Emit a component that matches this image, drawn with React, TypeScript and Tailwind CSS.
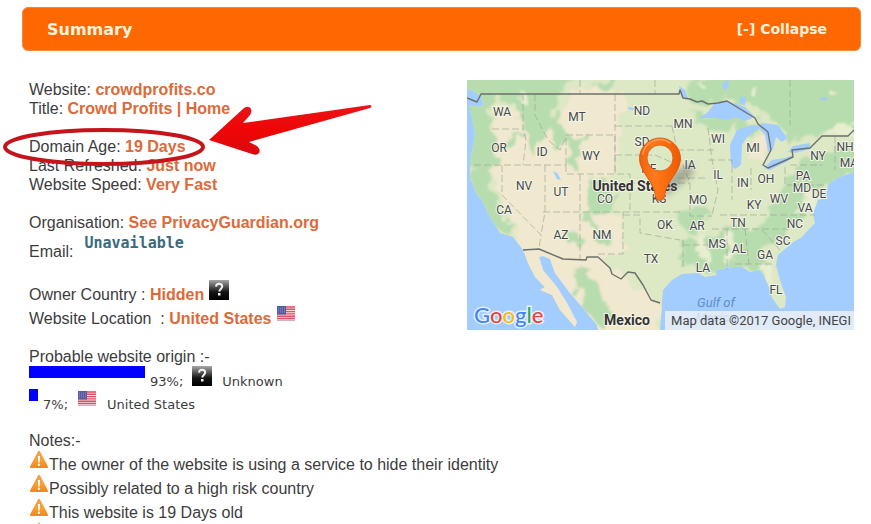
import React from 'react'

interface StateLabel {
  name: string;
  x: number;
  y: number;
}

const stateLabels: StateLabel[] = [
  { name: 'WA', x: 502, y: 112 }, { name: 'MT', x: 577, y: 117 }, { name: 'ND', x: 642, y: 111 },
  { name: 'MN', x: 683, y: 124 }, { name: 'OR', x: 499, y: 148 }, { name: 'ID', x: 542, y: 152 },
  { name: 'WY', x: 591, y: 156 }, { name: 'SD', x: 642, y: 142 }, { name: 'NE', x: 649, y: 169 },
  { name: 'IA', x: 690, y: 165 }, { name: 'WI', x: 718, y: 139 }, { name: 'MI', x: 753, y: 148 },
  { name: 'NV', x: 524, y: 186 }, { name: 'UT', x: 561, y: 192 }, { name: 'CO', x: 605, y: 199 },
  { name: 'KS', x: 659, y: 199 }, { name: 'MO', x: 698, y: 200 }, { name: 'IL', x: 718, y: 175 },
  { name: 'IN', x: 743, y: 183 }, { name: 'OH', x: 766, y: 179 }, { name: 'PA', x: 803, y: 176 },
  { name: 'NY', x: 818, y: 156 }, { name: 'NH', x: 845, y: 147 }, { name: 'MA', x: 849, y: 163 },
  { name: 'MD', x: 802, y: 188 }, { name: 'DE', x: 819, y: 194 }, { name: 'WV', x: 779, y: 199 },
  { name: 'KY', x: 754, y: 205 }, { name: 'VA', x: 805, y: 208 }, { name: 'TN', x: 738, y: 223 },
  { name: 'NC', x: 795, y: 224 }, { name: 'SC', x: 783, y: 241 }, { name: 'GA', x: 765, y: 255 },
  { name: 'AL', x: 739, y: 249 }, { name: 'MS', x: 717, y: 244 }, { name: 'AR', x: 697, y: 226 },
  { name: 'OK', x: 665, y: 225 }, { name: 'LA', x: 703, y: 268 }, { name: 'FL', x: 776, y: 290 },
  { name: 'TX', x: 651, y: 259 }, { name: 'NM', x: 602, y: 235 }, { name: 'AZ', x: 561, y: 235 },
  { name: 'CA', x: 504, y: 210 },
];

const origins = [
  { percent: 93, country: 'Unknown' },
  { percent: 7, country: 'United States' },
];

const notes = [
  'The owner of the website is using a service to hide their identity',
  'Possibly related to a high risk country',
  'This website is 19 Days old',
  '',
];

const UnknownIcon = () => (
  <svg viewBox="0 0 20 20" className="inline-block h-5 w-5 align-baseline" role="img" aria-label="Unknown country">
    <defs>
      <linearGradient id="unknownBg" x1="0" y1="0" x2="0" y2="1">
        <stop offset="0" stopColor="#a8a8a8" />
        <stop offset="0.3" stopColor="#5c5c5c" />
        <stop offset="0.6" stopColor="#141414" />
        <stop offset="1" stopColor="#000" />
      </linearGradient>
    </defs>
    <rect width="20" height="20" fill="url(#unknownBg)" />
    <path d="M7 6.600C7.200 4.600 8.400 3.800 10 3.800c1.900 0 3.200 1 3.200 2.700 0 2.300-2.900 2.500-2.900 5" fill="none" stroke="#f2f2f2" strokeWidth="2" />
    <rect x="9" y="13" width="2.500" height="2.500" fill="#f2f2f2" />
  </svg>
);

const FlagIcon = () => (
  <svg viewBox="0 0 20 20" className="inline-block h-5 w-5 align-baseline" role="img" aria-label="US flag">
    <rect x="1" y="2" width="18" height="15" fill="#f3e4e6" />
    <path d="M1 3h18M1 5.300h18M1 7.600h18M1 9.900h18M1 12.200h18M1 14.500h18" stroke="#dd5060" strokeWidth="1.400" />
    <rect x="1" y="2" width="9" height="8.500" fill="#4f5ca0" />
    <path d="M2 4h7M2 6h7M2 8h7" stroke="#9aa5cf" strokeWidth="0.800" strokeDasharray="1 1" />
    <path d="M1 16.500h18" stroke="#cbb5b5" />
  </svg>
);

const WarningIcon = () => (
  <svg viewBox="0 0 20 20" className="inline-block h-5 w-5 align-baseline" role="img" aria-label="Warning">
    <defs>
      <linearGradient id="warningBg" x1="0" y1="0" x2="0" y2="1">
        <stop offset="0" stopColor="#eda04c" />
        <stop offset="0.6" stopColor="#fb9d2c" />
        <stop offset="1" stopColor="#f08a20" />
      </linearGradient>
    </defs>
    <path d="M10 2 18 17H2Z" fill="url(#warningBg)" stroke="url(#warningBg)" strokeWidth="2.200" strokeLinejoin="round" />
    <path d="M8.900 6h2.200l-.4 6.500H9.300Z" fill="#fff" />
    <circle cx="10" cy="14.800" r="1.200" fill="#fff" />
  </svg>
);

const LocationMap = () => (
  <svg viewBox="467 80 387 250" className="h-[250px] w-[387px] shrink-0" role="img" aria-label="Map of the United States">
    <defs>
      <filter id="rough" x="-5%" y="-5%" width="110%" height="110%" colorInterpolationFilters="sRGB">
        <feTurbulence type="fractalNoise" baseFrequency="0.07" numOctaves="3" seed="4" />
        <feDisplacementMap in="SourceGraphic" scale="22" xChannelSelector="R" yChannelSelector="G" />
        <feGaussianBlur stdDeviation="0.800" />
      </filter>
      <filter id="soft" x="-30%" y="-30%" width="160%" height="160%">
        <feGaussianBlur stdDeviation="3" />
      </filter>
      <linearGradient id="pin" x1="0" y1="0" x2="1" y2="0">
        <stop offset="0" stopColor="#f0600a" />
        <stop offset="0.35" stopColor="#ff7a1c" />
        <stop offset="1" stopColor="#f05a00" />
      </linearGradient>
      <clipPath id="land">
        <path d="M467 80H854V172L837 178 828 185 825 198 818 200 813 213 815 223 810 228 802 237 792 243 778 255 776 265 780 280 786 297 785 307 780 309 772 298 770 290 765 278 760 270 750 272 742 267 732 267 715 270 717 275 705 277 698 273 682 274 672 280 663 290 662 303 660 330H598L597 325 583 308 570 293 555 273 550 259 543 256 539 257 543 270 557 287 567 303 577 322 575 327 560 310 552 295 540 290 545 287 535 277 528 263 523 250 513 237 500 233 490 217 482 200 477 195 470 178 470 162 475 135 472 118 469 105 478 107 484 105 481 96 467 88Z" />
      </clipPath>
    </defs>

    <rect x="467" y="80" width="387" height="250" fill="#a3ccff" />
    <g clipPath="url(#land)">
      <rect x="467" y="80" width="387" height="250" fill="#dde8c4" />
      {/* dry ground */}
      <g fill="#f0e8cf" filter="url(#rough)">
        <path d="M492 105 525 103 528 130 560 115 575 85 625 92 620 130 615 178 590 175 592 215 622 215 625 252 600 260 640 290 665 310 650 345 570 345 520 250 510 205 480 165 492 150Z" />
        <path d="M545 250 600 290 585 340 530 290Z" />
        <path d="M755 138 768 140 766 160 752 162Z" />
      </g>
      {/* forests */}
      <g fill="#b7dcae" filter="url(#rough)">
        <path d="M460 70H575L562 95 552 108 566 122 572 140 556 148 545 130 534 150 524 132 520 112 500 98 490 112 492 140 498 160 488 172 464 165 464 130Z" />
        <path d="M468 172 485 168 490 190 512 218 512 235 490 225 478 198Z" />
        <path d="M566 140 582 135 584 155 572 168Z" />
        <path d="M588 180 602 176 606 192 618 200 604 218 592 210Z" />
        <path d="M580 212 592 208 596 228 610 240 600 246Z" />
        <path d="M560 232 585 240 584 248 566 240Z" />
        <path d="M576 270 592 268 600 290 612 310 606 330 592 318 580 295Z" />
        <path d="M507 137 520 134 516 148 508 148Z" />
        <path d="M684 90 725 66H870V134L822 132 790 146 778 120 755 112 725 96 700 108Z" />
        <path d="M690 110 730 118 738 126 725 138 706 128Z" />
        <path d="M735 122 765 124 758 134 740 134Z" />
        <path d="M788 180 800 160 865 138 864 168 822 186 804 215 784 240 762 250 772 262 768 285 755 272 700 272 676 258 682 236 708 244 720 226 755 228 772 210Z" />
        <path d="M683 212 705 207 710 217 692 235 680 225Z" />
        <path d="M593 84 614 80 610 92Z" />
      </g>
      {/* lighter clearings */}
      <g fill="#e8eed0" filter="url(#rough)">
        <path d="M725 230 735 232 733 262 724 258Z" />
        <path d="M758 262 772 262 776 290 768 285Z" />
        <path d="M806 186 820 190 812 216 800 212Z" />
        <path d="M822 132 850 120 858 134 830 138Z" />
        <path d="M695 240 705 238 712 265 702 268Z" />
        <path d="M496 202 504 204 510 224 502 222Z" />
        <path d="M520 96 528 98 526 104 519 103ZM700 82l6 2-2 6-5-2ZM752 90l6-1 2 4-6 2ZM830 88l10 2-4 5-7-2Z" />
      </g>
    </g>

    {/* lakes */}
    <g fill="#a3ccff">
      <path d="M700 118 708 112 715 103 727 101 745 107 755 117 745 121 736 117 728 120 715 118Z" />
      <path d="M730 145 737 130 752 125 763 127 756 130 747 137 742 145 741 165 735 169 731 165Z" />
      <path d="M762 123 778 125 787 138 782 142 776 137 773 149 768 152 765 135 758 127Z" />
      <path d="M764 168 772 160 785 158 793 155 788 161 770 170Z" />
      <path d="M788 152 793 146 810 143 810 149 795 153Z" />
      <path d="M722 84 728 80 729 87 724 90ZM740 97l6 0-1 8-5-1ZM679 86l6 4 3 8-6 0ZM820 98l6-1 1 3-5 1ZM553 171l4 2 4 7-4-1ZM628 107l6 1-1 2-5-1Z" />
    </g>

    {/* state lines */}
    <path
      d="M492 129H523M523 94V129L526 140 523 165M474 165H566M502 165V195L541 235 539 249M545 165V212L541 235M535 94V115L548 140 560 150 566 137M566 165V135H615V174M566 165V174H630V183H690M580 174V260M543 212H680M615 94V174M615 126H672M615 155H655L678 165M630 183V212M623 212V254H598M623 215H640V233L680 240M677 150H715M672 126 677 150 690 183M678 178H708M690 183V216H712M708 160H732V200M751 168V190M785 167V185H826M790 165H822M835 136V170M720 215H815M712 229H790M727 229V270M745 229 749 264M735 264H775M683 240V270M683 245H708M762 230 780 250M580 80V94M655 80V94M790 80V125M708 128 712 160 718 190 712 215"
      fill="none" stroke="#9aa394" strokeWidth="0.800" strokeDasharray="7 3" opacity="0.800"
    />

    {/* country borders */}
    <g fill="none" stroke="#6c706c" strokeWidth="1.400" strokeLinejoin="round">
      <path d="M467 98 477 102 481 94H679L680 90 683 98 690 99 697 102 702 101 708 104 718 103 727 101 755 118 758 124 768 132 771 150 763 165 768 168 793 157 792 150 810 148 822 136H848L854 130" />
      <path d="M523 250 539 249 563 259 586 260 587 257H598L610 268 612 274 621 279 628 272 635 273 643 285 651 300 660 303" />
    </g>

    <g className="font-[Roboto,sans-serif] text-[12px]" fill="#45494a" stroke="#f4f5e8" strokeWidth="2" paintOrder="stroke" textAnchor="middle">
      {stateLabels.map((label) => (
        <text key={label.name} x={label.x} y={label.y + 4}>{label.name}</text>
      ))}
    </g>
    <g className="font-[Roboto,sans-serif] text-[14px] font-bold" fill="#333" stroke="#f4f5e8" strokeWidth="2" paintOrder="stroke" textAnchor="middle">
      <text x="635" y="191">United States</text>
      <text x="627" y="325">Mexico</text>
    </g>
    <g className="font-[Roboto,sans-serif] text-[13px] italic" fill="#5d8fd0" textAnchor="middle">
      <text x="716" y="307">Gulf of</text>
      <text x="716" y="322">Mexico</text>
    </g>

    {/* marker */}
    <path d="M662 199 672 172 690 164 694 174Z" fill="#555" opacity="0.400" filter="url(#soft)" />
    <path
      fillRule="evenodd"
      d="M660 138a20.500 20.500 0 0 1 20.500 20.500c0 14-14 22-15.500 36q-1 6-5 6t-5-6c-1.500-14-15.500-22-15.500-36A20.500 20.500 0 0 1 660 138ZM660 145a13 13 0 1 0 0 26 13 13 0 1 0 0-26Z"
      fill="url(#pin)" stroke="#d95304" strokeWidth="0.800"
    />
    <path d="M643 154a17 17 0 0 1 27-11" fill="none" stroke="#ff9a55" strokeWidth="1.500" strokeLinecap="round" />

    <text x="474" y="323" className="font-[Lato,sans-serif] text-[22px] font-medium" stroke="#e6f1ff" strokeWidth="3" paintOrder="stroke">
      <tspan fill="#4285f4">G</tspan>
      <tspan fill="#ea4335">o</tspan>
      <tspan fill="#fbbc05">o</tspan>
      <tspan fill="#4285f4">g</tspan>
      <tspan fill="#34a853">l</tspan>
      <tspan fill="#ea4335">e</tspan>
    </text>
    <rect x="665" y="311" width="189" height="19" fill="#f5f5f5" opacity="0.750" />
    <text x="851" y="325" textAnchor="end" className="font-[Roboto,sans-serif] text-[13px]" fill="#444">Map data ©2017 Google, INEGI</text>
  </svg>
);

// Hand-drawn ring and arrow pointing at the domain age
const Annotation = () => (
  <svg viewBox="0 0 380 80" className="pointer-events-none absolute top-[20px] left-[-29px] h-[80px] w-[380px]" aria-hidden="true">
    <defs>
      <linearGradient id="arrow" x1="0" y1="0" x2="0" y2="1">
        <stop offset="0" stopColor="#e8151a" />
        <stop offset="0.5" stopColor="#f00505" />
        <stop offset="1" stopColor="#d90a10" />
      </linearGradient>
    </defs>
    <ellipse cx="104" cy="47" rx="99" ry="17" fill="none" stroke="#c5141b" strokeWidth="4" />
    <path d="M209 40 244 8Q249 5 251 9 252 12 250 15L243 23 370 5Q373 6 370 8L249 42 257 46Q261 50 259 53 257 56 252 54Z" fill="url(#arrow)" />
  </svg>
);

const App = () => {
  const [open, setOpen] = React.useState(true);

  return (
    <div className="h-screen overflow-hidden bg-white pt-[7px] font-['Liberation_Sans',Arial,sans-serif] text-[16px] leading-[19px] text-[#3c3c3c]">

      {/* Title bar */}
      <div className="mr-[10px] ml-[22px] flex h-[44px] items-center justify-between rounded-[6px] border border-[#f28a3c] bg-[#ff6700] pr-[33px] pl-6 font-['DejaVu_Sans',Verdana,sans-serif] font-bold text-[#fff3dc]">
        <h2 className="text-[16px]">Summary</h2>
        <button className="cursor-pointer text-[14px]" onClick={() => setOpen(!open)}>
          {open ? '[-] Collapse' : '[+] Expand'}
        </button>
      </div>

      {open && (
        <div className="flex items-start pt-[29px] pr-[17px] pl-[29px]">
          <div className="relative w-0 grow whitespace-nowrap">
            <p>Website: <a href="#website" className="font-bold text-[#dd6a38]">crowdprofits.co</a></p>
            <p>Title: <b className="text-[#dd6a38]">Crowd Profits | Home</b></p>

            <div className="mt-[19px]">
              <p>Domain Age: <b className="text-[#dd6a38]">19 Days</b></p>
              <p>Last Refreshed: <b className="text-[#dd6a38]">Just now</b></p>
              <p>Website Speed: <b className="text-[#dd6a38]">Very Fast</b></p>
            </div>

            <div className="mt-[19px]">
              <p>Organisation: <a href="#organisation" className="font-bold text-[#dd6a38]">See PrivacyGuardian.org</a></p>
              <div className="flex h-[29px] items-end gap-[11px]">
                <span>Email:</span>
                <span className="self-start pt-[2px] font-['DejaVu_Sans_Mono',monospace] text-[15px] font-bold text-[#3a6b7c]">Unavailable</span>
              </div>
            </div>

            <div className="mt-[19px]">
              <p>Owner Country : <b className="text-[#dd6a38]">Hidden</b> <UnknownIcon /></p>
              <p>Website Location&nbsp; : <b className="text-[#dd6a38]">United States</b> <FlagIcon /></p>
            </div>

            <div className="mt-[19px]">
              <p>Probable website origin :-</p>
              {origins.map((origin) => (
                <div key={origin.country} className="flex h-[23px] items-start text-[13px]">
                  <div className="h-3 shrink-0 bg-[#0000ff]" style={{ width: Math.round(origin.percent * 1.25) }} />
                  <span className="pt-[6px] pl-[5px] font-['DejaVu_Sans',Verdana,sans-serif]">{origin.percent}%;</span>
                  <span className="ml-[9px] flex">
                    {origin.country === 'Unknown' ? <UnknownIcon /> : <FlagIcon />}
                  </span>
                  <span className="ml-[10px] pt-[6px] font-['DejaVu_Sans',Verdana,sans-serif]">{origin.country}</span>
                </div>
              ))}
            </div>

            <div className="mt-[19px]">
              <p>Notes:-</p>
              <ul>
                {notes.map((note) => (
                  <li key={note}><WarningIcon />{note}</li>
                ))}
              </ul>
            </div>

            <Annotation />
          </div>

          <LocationMap />
        </div>
      )}
    </div>
  );
};

export default App;
